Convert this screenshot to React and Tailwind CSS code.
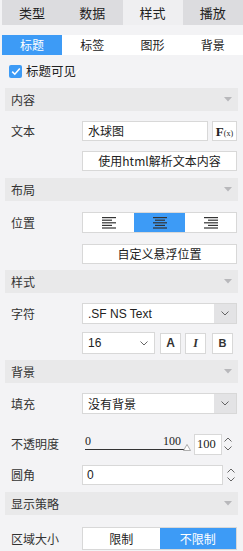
import React from 'react';

const cjk = { fontFamily: '"Noto Sans CJK SC", "Noto Sans", sans-serif' };

const AlignIcon = ({ mode }) => {
  const rows = [14, 10, 14, 10, 14];
  return (
    <svg width="16" height="13" viewBox="0 0 16 13">
      {rows.map((w, i) => {
        const len = mode === 'center' ? (i % 2 ? 10 : 14) : w;
        let x = 1;
        if (mode === 'center') x = 1 + (14 - len) / 2;
        if (mode === 'right') x = 15 - len;
        return <rect key={i} x={x} y={1 + i * 2.6} width={len} height="1.2" fill="#333" />;
      })}
    </svg>
  );
};

const Chevron = ({ up }) => (
  <svg width="8" height="5" viewBox="0 0 8 5">
    <path d={up ? 'M0.5 4.5 L4 1 L7.5 4.5' : 'M0.5 0.5 L4 4 L7.5 0.5'} fill="none" stroke="#555" strokeWidth="0.9" />
  </svg>
);

const Spinner = () => (
  <div className="flex flex-col items-center justify-center gap-[4px] w-[12px]">
    <Chevron up />
    <Chevron />
  </div>
);

const SectionHeader = ({ title }) => (
  <div className="mx-[5px] h-[23px] bg-[#e9e9ea] flex items-center justify-between pl-[6px] pr-[6px] text-[12px] text-[#333]">
    <span>{title}</span>
    <svg width="8" height="5" viewBox="0 0 8 5"><path d="M0 0 L8 0 L4 4.5 Z" fill="#b8b8bb" /></svg>
  </div>
);

const Row = ({ label, children, className = '' }) => (
  <div className={`flex items-center ${className}`}>
    <div className="w-[82px] pl-[11px] text-[12px] text-[#333]">{label}</div>
    <div className="flex-1 pr-[6px] flex items-center">{children}</div>
  </div>
);

const Select = ({ value, latin }) => (
  <div className="flex-1 h-[21px] bg-white border border-[#d8d8d8] flex items-center">
    <span
      className="flex-1 pl-[5px] text-[12px] text-[#222]"
      style={latin ? { fontFamily: '"Liberation Sans", Arial, sans-serif' } : undefined}
    >
      {value}
    </span>
    <span className="w-[22px] h-full bg-[#e3e3e5] flex items-center justify-center">
      <Chevron />
    </span>
  </div>
);

export default function App() {
  const tabs = ['类型', '数据', '样式', '播放'];
  const subTabs = ['标题', '标签', '图形', '背景'];
  return (
    <div className="w-[243px] h-[551px] bg-[#f3f3f5] overflow-hidden text-[#333]" style={cjk}>
      <div className="grid grid-cols-4 h-[25px] pl-[2px] bg-[#f3f3f5]">
        {tabs.map((t, i) => (
          <div
            key={t}
            className={`flex items-center justify-center text-[13px] text-[#222] ${i === 2 ? 'bg-[#efeff1]' : 'bg-[#dcdcdf]'}`}
          >
            {t}
          </div>
        ))}
      </div>

      <div className="grid grid-cols-4 h-[20px] mt-[10px] ml-[2px] bg-white">
        {subTabs.map((t, i) => (
          <div
            key={t}
            className={`flex items-center justify-center text-[12px] ${i === 0 ? 'bg-[#3d9bf6] text-white' : 'text-[#222]'}`}
          >
            {t}
          </div>
        ))}
      </div>

      <div className="h-[33px] flex items-center pl-[9px] gap-[4px]">
        <div className="w-[13px] h-[13px] rounded-[2px] bg-[#3d9bf6] flex items-center justify-center">
          <svg width="10" height="9" viewBox="0 0 10 9">
            <path d="M1.2 4.6 L3.8 7.2 L8.8 1.4" fill="none" stroke="white" strokeWidth="1.6" />
          </svg>
        </div>
        <span className="text-[12.5px] text-[#222]">标题可见</span>
      </div>

      <SectionHeader title="内容" />
      <Row label="文本" className="mt-[10px]">
        <div className="flex-1 h-[20px] bg-white border border-[#d8d8d8] flex items-center pl-[5px] text-[12px] text-[#222]">
          水球图
        </div>
        <div
          className="ml-[4px] w-[25px] h-[20px] bg-white border border-[#d8d8d8] flex items-end justify-center pb-[2px] text-[#222]"
          style={{ fontFamily: '"Liberation Serif", serif' }}
        >
          <span className="text-[13px] font-bold leading-none">F</span>
          <span className="text-[8px] leading-none">(x)</span>
        </div>
      </Row>
      <Row label="" className="mt-[10px]">
        <div className="flex-1 h-[20px] bg-white border border-[#d8d8d8] flex items-center justify-center text-[12px] text-[#222]">
          使用html解析文本内容
        </div>
      </Row>

      <div className="mt-[7px]">
        <SectionHeader title="布局" />
      </div>
      <Row label="位置" className="mt-[11px]">
        <div className="flex-1 h-[21px] bg-white border border-[#d8d8d8] grid grid-cols-3">
          <div className="flex items-center justify-center"><AlignIcon mode="left" /></div>
          <div className="flex items-center justify-center bg-[#3d9bf6]"><AlignIcon mode="center" /></div>
          <div className="flex items-center justify-center"><AlignIcon mode="right" /></div>
        </div>
      </Row>
      <Row label="" className="mt-[11px]">
        <div className="flex-1 h-[20px] bg-white border border-[#d8d8d8] flex items-center justify-center text-[12px] text-[#222]">
          自定义悬浮位置
        </div>
      </Row>

      <div className="mt-[6px]">
        <SectionHeader title="样式" />
      </div>
      <Row label="字符" className="mt-[10px]">
        <Select value=".SF NS Text" latin />
      </Row>
      <Row label="" className="mt-[8px]">
        <div className="w-[73px] h-[22px] bg-white border border-[#d8d8d8] flex items-center">
          <span className="flex-1 pl-[5px] text-[12px] text-[#222]" style={{ fontFamily: '"Liberation Sans", Arial, sans-serif' }}>16</span>
          <span className="w-[20px] flex items-center justify-center"><Chevron /></span>
        </div>
        <div className="ml-[5px] w-[21px] h-[21px] bg-white border border-[#d8d8d8] flex items-center justify-center text-[12px] font-bold" style={{ fontFamily: '"Liberation Sans", Arial, sans-serif' }}>A</div>
        <div className="ml-[4px] w-[21px] h-[21px] bg-white border border-[#d8d8d8] flex items-center justify-center text-[12px] italic font-bold" style={{ fontFamily: '"Liberation Serif", serif' }}>I</div>
        <div className="ml-[6px] w-[21px] h-[21px] bg-white border border-[#d8d8d8] flex items-center justify-center text-[11px] font-bold" style={{ fontFamily: '"Liberation Sans", Arial, sans-serif' }}>B</div>
      </Row>

      <div className="mt-[6px]">
        <SectionHeader title="背景" />
      </div>
      <Row label="填充" className="mt-[10px]">
        <Select value="没有背景" />
      </Row>
      <Row label="不透明度" className="mt-[18px]">
        <div className="relative w-[108px] h-[24px]" style={{ fontFamily: '"Liberation Serif", serif' }}>
          <span className="absolute left-[3px] top-[0px] text-[12px] text-[#222]">0</span>
          <span className="absolute left-[81px] top-[0px] text-[12px] text-[#222]">100</span>
          <div className="absolute left-[3px] top-[17px] w-[100px] h-[1px] bg-[#333]" />
          <svg className="absolute left-[101px] top-[12px]" width="8" height="7" viewBox="0 0 8 7">
            <path d="M4 0.5 L7.5 6.5 L0.5 6.5 Z" fill="white" stroke="#999" strokeWidth="0.8" />
          </svg>
        </div>
        <div className="ml-[4px] w-[28px] h-[21px] bg-white border border-[#d8d8d8] flex items-center pl-[2px] text-[12.5px] text-[#222]" style={{ fontFamily: '"Liberation Serif", serif' }}>
          100
        </div>
        <Spinner />
      </Row>
      <Row label="圆角" className="mt-[9px]">
        <div className="flex-1 h-[20px] bg-white border border-[#d8d8d8] flex items-center pl-[4px] text-[12px] text-[#222]" style={{ fontFamily: '"Liberation Sans", Arial, sans-serif' }}>
          0
        </div>
        <div className="ml-[2px]"><Spinner /></div>
      </Row>

      <div className="mt-[7px]">
        <SectionHeader title="显示策略" />
      </div>
      <Row label="区域大小" className="mt-[12px]">
        <div className="flex-1 h-[23px] bg-white border border-[#d8d8d8] grid grid-cols-2 text-[12px]">
          <div className="flex items-center justify-center text-[#222]">限制</div>
          <div className="flex items-center justify-center bg-[#3d9bf6] text-white">不限制</div>
        </div>
      </Row>
    </div>
  );
}
